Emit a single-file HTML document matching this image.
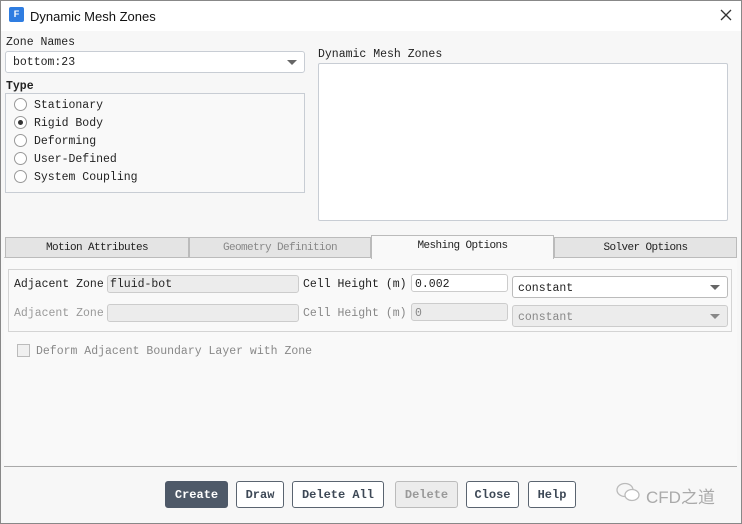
<!DOCTYPE html>
<html><head><style>
*{box-sizing:border-box;margin:0;padding:0}
body{width:742px;height:524px;background:#f7f7f7;font-family:"Liberation Mono","Noto Sans CJK SC",monospace;font-size:11.5px;color:#222;position:relative;overflow:hidden}
.a{position:absolute}
.t{white-space:nowrap;margin-top:1px}
.box{border:1px solid #c8cdd4;border-radius:3px;background:#fff}
.rad{width:13px;height:13px;border:1px solid #999;border-radius:50%;background:#fff}
.btn{position:absolute;top:481px;height:27px;border:1px solid #5a6470;border-radius:3px;background:#fff;font-weight:bold;font-size:12px;color:#3d4856;text-align:center;line-height:26px;font-family:"Liberation Mono",monospace}
.tab{position:absolute;top:237px;height:21px;background:#e4e4e4;border:1px solid #bbb;text-align:center;line-height:21px;font-size:11px;font-family:"Liberation Mono",monospace;letter-spacing:-0.6px}
.arrow{position:absolute;width:0;height:0;border-left:5px solid transparent;border-right:5px solid transparent;border-top:5px solid #666}
</style></head><body>
<div class="a" style="left:0;top:0;width:742px;height:524px;border:1px solid #888;z-index:5;pointer-events:none"></div>
<div class="a" style="left:0;top:0;width:742px;height:31px;background:#fff"></div>
<div class="a" style="left:9px;top:7px;width:15px;height:15px;background:#2f7de1;border-radius:2px;color:#fff;font:bold 9px 'Liberation Sans',sans-serif;text-align:center;line-height:15px">F</div>
<div class="a t" style="left:30px;top:8px;font:13px 'Liberation Sans',sans-serif;color:#111">Dynamic Mesh Zones</div>
<svg class="a" style="left:720px;top:9px" width="12" height="12"><path d="M1 1L11 11M11 1L1 11" stroke="#333" stroke-width="1.3"/></svg>

<div class="a t" style="left:6px;top:35px">Zone Names</div>
<div class="a box" style="left:5px;top:51px;width:300px;height:22px"></div>
<div class="a t" style="left:13px;top:55px">bottom:23</div>
<div class="arrow" style="left:287px;top:60px"></div>
<div class="a t" style="left:6px;top:79px;font-weight:bold">Type</div>
<div class="a" style="left:5px;top:93px;width:300px;height:100px;border:1px solid #c8cdd4;background:#f9f9f9"></div>
<div class="a rad" style="left:14px;top:98px"></div><div class="a t" style="left:34px;top:98px">Stationary</div>
<div class="a rad" style="left:14px;top:116px"></div><div class="a" style="left:18px;top:120px;width:5px;height:5px;border-radius:50%;background:#333"></div><div class="a t" style="left:34px;top:116px">Rigid Body</div>
<div class="a rad" style="left:14px;top:134px"></div><div class="a t" style="left:34px;top:134px">Deforming</div>
<div class="a rad" style="left:14px;top:152px"></div><div class="a t" style="left:34px;top:152px">User-Defined</div>
<div class="a rad" style="left:14px;top:170px"></div><div class="a t" style="left:34px;top:170px">System Coupling</div>

<div class="a t" style="left:318px;top:47px">Dynamic Mesh Zones</div>
<div class="a" style="left:318px;top:63px;width:410px;height:158px;background:#fff;border:1px solid #c8cdd4;border-radius:2px"></div>

<div class="a" style="left:4px;top:257px;width:733px;height:208px;background:#f9f9f9;border-top:1px solid #ccc"></div>
<div class="tab" style="left:5px;width:184px">Motion Attributes</div>
<div class="tab" style="left:189px;width:182px;color:#888">Geometry Definition</div>
<div class="tab" style="left:371px;width:183px;top:235px;height:24px;background:#f9f9f9;border-bottom:none">Meshing Options</div>
<div class="tab" style="left:554px;width:183px">Solver Options</div>

<div class="a" style="left:8px;top:269px;width:724px;height:63px;border:1px solid #d4d4d4;background:#f9f9f9"></div>
<div class="a t" style="left:14px;top:277px">Adjacent Zone</div>
<div class="a" style="left:107px;top:275px;width:192px;height:18px;background:#ececec;border:1px solid #ccc;border-radius:3px"></div>
<div class="a t" style="left:110px;top:277px">fluid-bot</div>
<div class="a t" style="left:303px;top:277px">Cell Height (m)</div>
<div class="a" style="left:411px;top:274px;width:97px;height:18px;background:#fff;border:1px solid #ccc;border-radius:3px"></div>
<div class="a t" style="left:415px;top:277px">0.002</div>
<div class="a" style="left:512px;top:276px;width:216px;height:22px;background:#fff;border:1px solid #bbb;border-radius:3px"></div>
<div class="a t" style="left:518px;top:281px">constant</div>
<div class="arrow" style="left:710px;top:285px"></div>

<div class="a t" style="left:14px;top:306px;color:#999">Adjacent Zone</div>
<div class="a" style="left:107px;top:304px;width:192px;height:18px;background:#ececec;border:1px solid #ccc;border-radius:3px"></div>
<div class="a t" style="left:303px;top:306px;color:#888">Cell Height (m)</div>
<div class="a" style="left:411px;top:303px;width:97px;height:18px;background:#ececec;border:1px solid #ccc;border-radius:3px"></div>
<div class="a t" style="left:415px;top:306px;color:#888">0</div>
<div class="a" style="left:512px;top:305px;width:216px;height:22px;background:#ececec;border:1px solid #ccc;border-radius:3px"></div>
<div class="a t" style="left:518px;top:310px;color:#888">constant</div>
<div class="arrow" style="left:710px;top:314px;border-top-color:#888"></div>

<div class="a" style="left:17px;top:344px;width:13px;height:13px;border:1px solid #bbb;background:#f0f0f0"></div>
<div class="a t" style="left:36px;top:344px;color:#888">Deform Adjacent Boundary Layer with Zone</div>

<div class="a" style="left:4px;top:466px;width:733px;height:1px;background:#aaa"></div>
<div class="btn" style="left:165px;width:63px;background:#4e5968;color:#fff;border-color:#4e5968">Create</div>
<div class="btn" style="left:236px;width:48px">Draw</div>
<div class="btn" style="left:292px;width:92px">Delete All</div>
<div class="btn" style="left:395px;width:63px;background:#ececec;border-color:#bbb;color:#999">Delete</div>
<div class="btn" style="left:466px;width:53px">Close</div>
<div class="btn" style="left:528px;width:48px">Help</div>
<svg class="a" style="left:614px;top:480px" width="28" height="24"><ellipse cx="11" cy="10" rx="8" ry="6.5" fill="none" stroke="#bbb" stroke-width="1.3"/><ellipse cx="18" cy="15" rx="7" ry="5.5" fill="#fff" stroke="#bbb" stroke-width="1.3"/></svg>
<div class="a t" style="left:646px;top:482px;font:17px 'Liberation Sans','Noto Sans CJK SC',sans-serif;color:#aaa">CFD之道</div>
</body></html>
